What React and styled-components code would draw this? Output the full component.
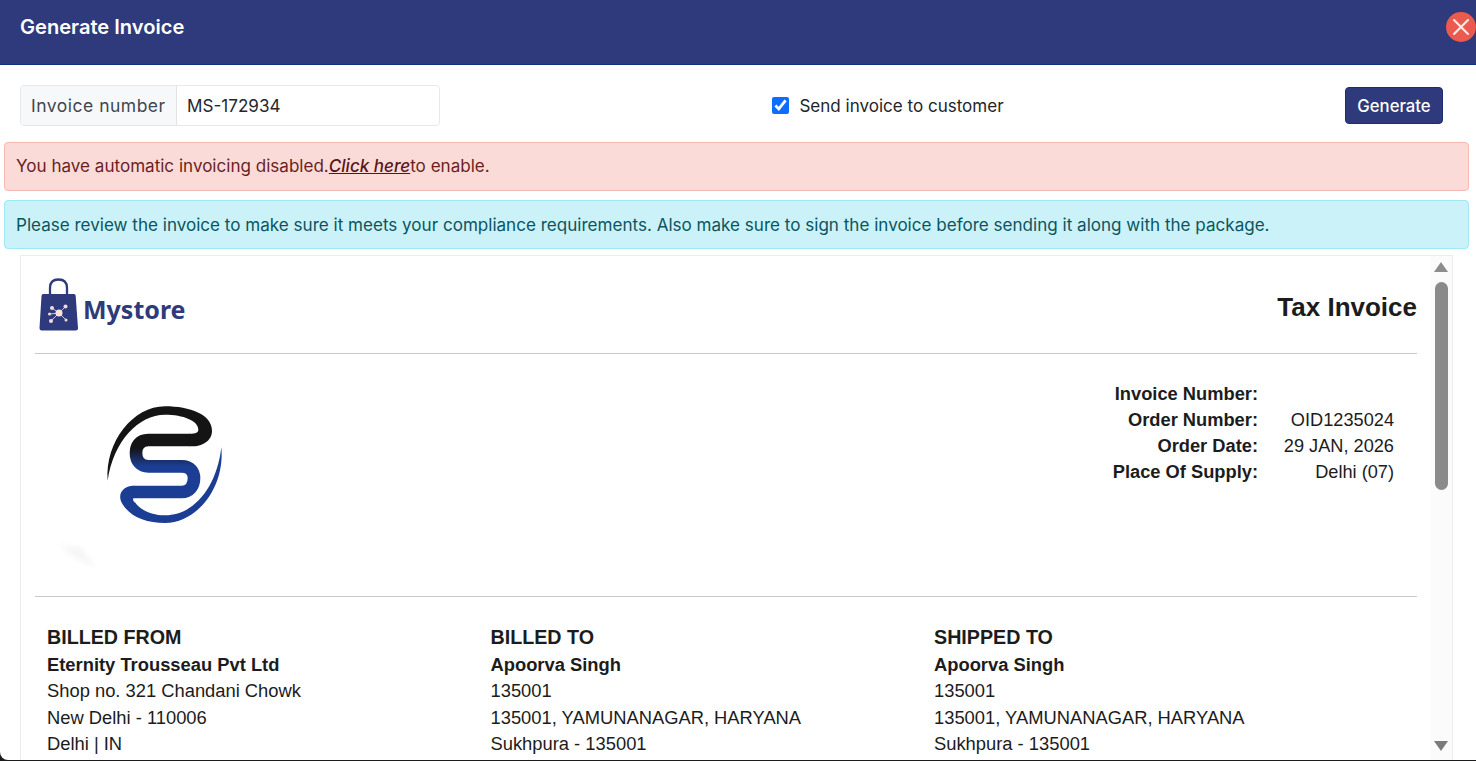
import React from 'react';
import styled, { createGlobalStyle } from 'styled-components';
import { X } from 'lucide-react';

const GlobalStyle = createGlobalStyle`
  html, body {
    margin: 0;
    height: 100%;
    background: #1c1c1c;
    overflow: hidden;
  }
  * {
    box-sizing: border-box;
  }
`;

const Modal = styled.div`
  position: relative;
  display: flex;
  flex-flow: column nowrap;
  width: 1476px;
  height: 760px;
  background: #fff;
  border-radius: 0 0 0 8px;
  overflow: hidden;
  font-family: Inter, 'Liberation Sans', sans-serif;
`;

const Header = styled.header`
  flex: 0 0 65px;
  padding: 14px 20px 0;
  background: #2e3a7b;
  border-bottom: 1px solid #12307f;
`;

const Title = styled.h2`
  margin: 0;
  font-size: 20.1px;
  line-height: 26px;
  font-weight: 600;
  color: #fff;
`;

const CloseButton = styled.button`
  position: absolute;
  top: 12px;
  left: 1446px;
  display: flex;
  align-items: center;
  justify-content: center;
  width: 30px;
  height: 30px;
  padding: 0;
  border: 0;
  border-radius: 50%;
  background: #ea5a4e;
  color: #fde9e6;
`;

const Toolbar = styled.div`
  flex: 0 0 77px;
  display: flex;
  align-items: center;
  justify-content: space-between;
  padding: 4px 33px 0 20px;
`;

const InputGroup = styled.div`
  display: flex;
  width: 420px;
  height: 41px;
  border: 1px solid #e6e8eb;
  border-radius: 4px;
  overflow: hidden;
`;

const InputLabel = styled.span`
  display: flex;
  align-items: center;
  padding: 0 10px;
  width: 156px;
  background: #f7f8fa;
  border-right: 1px solid #e2e4e8;
  color: #3f4650;
  font-size: 17.5px;
  letter-spacing: 0.5px;
  white-space: nowrap;
`;

const InputValue = styled.span`
  display: flex;
  align-items: center;
  padding: 0 10px;
  color: #23272e;
  font-size: 17.1px;
`;

const CheckLabel = styled.label`
  display: flex;
  align-items: center;
  gap: 10px;
  margin-left: -9px;
  font-size: 17.05px;
  color: #212529;
`;

const CheckBox = styled.input`
  width: 17px;
  height: 17px;
  margin: 0;
  accent-color: #0d6efd;
`;

const GenerateButton = styled.button`
  width: 98px;
  height: 37px;
  padding: 0;
  border: 1px solid #1f2c72;
  border-radius: 4px;
  background: #2e3a7b;
  color: #fff;
  font-family: inherit;
  font-size: 16.7px;
  font-weight: 500;
`;

const Alert = styled.div`
  flex: 0 0 49px;
  display: flex;
  align-items: center;
  width: 1465px;
  margin: 0 0 9px 4px;
  padding: 0 11px ${({ $danger }) => ($danger ? '2px' : '1px')};
  border: 1px solid ${({ $danger }) => ($danger ? '#f7b9b3' : '#a0e8f4')};
  border-radius: 4px;
  background: ${({ $danger }) => ($danger ? '#fadbd8' : '#caf2f8')};
  color: ${({ $danger }) => ($danger ? '#6a1f1f' : '#0a5560')};
  font-size: 17.07px;
  white-space: pre;
`;

const AlertLink = styled.a`
  font-style: italic;
  font-weight: 500;
  color: #58151c;
  text-decoration: underline;
`;

const Frame = styled.div`
  flex: 1;
  display: flex;
  min-height: 0;
  width: 1433px;
  margin: -3px 0 0 20px;
  border: 1px solid #ececec;
  border-bottom: 0;
  font-family: 'Liberation Sans', Arial, sans-serif;
  color: #1c1c1c;
`;

const InvoiceBody = styled.div`
  flex: 1;
  min-width: 0;
  padding: 0 13px 0 14px;
  overflow: hidden;
`;

const InvoiceTop = styled.div`
  display: flex;
  align-items: center;
  justify-content: space-between;
  height: 98px;
  border-bottom: 1px solid #c9c9c9;
`;

const Brand = styled.div`
  display: flex;
  align-items: flex-end;
  gap: 4px;
  margin-left: 4px;
`;

const BrandName = styled.span`
  margin-bottom: 6px;
  font-family: 'Noto Sans', sans-serif;
  font-size: 25px;
  line-height: 34px;
  font-weight: 700;
  color: #2e3a7b;
`;

const DocTitle = styled.h1`
  margin: 6px 0 0;
  font-size: 26px;
  font-weight: 700;
`;

const Details = styled.div`
  display: flex;
  justify-content: space-between;
  height: 243px;
  border-bottom: 1px solid #c9c9c9;
`;

const SellerLogo = styled.svg`
  display: block;
  margin: 49px 0 0 15px;
`;

const MetaTable = styled.dl`
  display: grid;
  grid-template-columns: auto 136px;
  grid-auto-rows: 26px;
  align-content: start;
  margin: 27px 23px 0 0;
  font-size: 18.2px;
  line-height: 26px;
`;

const MetaLabel = styled.dt`
  font-size: 18.3px;
  font-weight: 700;
  text-align: right;
`;

const MetaValue = styled.dd`
  margin: 0;
  text-align: right;
`;

const Parties = styled.div`
  display: grid;
  grid-template-columns: repeat(3, 443.5px);
  padding: 26px 0 0 12px;
`;

const Party = styled.div`
  font-size: 18.35px;
  line-height: 26.3px;
`;

const PartyHeading = styled.div`
  margin-bottom: 1px;
  font-size: 19.7px;
  line-height: 28px;
  font-weight: 700;
`;

const PartyName = styled.div`
  font-weight: 700;
`;

const Scrollbar = styled.div`
  flex: 0 0 22px;
  display: flex;
  flex-flow: column nowrap;
  align-items: center;
  padding: 6px 0 9px;
  background: #fbfbfb;
`;

const ScrollArrow = styled.div`
  width: 0;
  height: 0;
  margin-top: ${({ $down }) => ($down ? 'auto' : '0')};
  border-left: 7px solid transparent;
  border-right: 7px solid transparent;
  border-top: ${({ $down }) => ($down ? '10px solid #7b7b7b' : '0')};
  border-bottom: ${({ $down }) => ($down ? '0' : '10px solid #8c8c8c')};
`;

const ScrollThumb = styled.div`
  width: 13px;
  height: 208px;
  margin-top: 10px;
  border-radius: 7px;
  background: #8a8a8a;
`;

const metaRows = [
  ['Invoice Number:', ''],
  ['Order Number:', 'OID1235024'],
  ['Order Date:', '29 JAN, 2026'],
  ['Place Of Supply:', 'Delhi (07)'],
];

const parties = [
  {
    heading: 'BILLED FROM',
    name: 'Eternity Trousseau Pvt Ltd',
    lines: ['Shop no. 321 Chandani Chowk', 'New Delhi - 110006', 'Delhi | IN'],
  },
  {
    heading: 'BILLED TO',
    name: 'Apoorva Singh',
    lines: ['135001', '135001, YAMUNANAGAR, HARYANA', 'Sukhpura - 135001'],
  },
  {
    heading: 'SHIPPED TO',
    name: 'Apoorva Singh',
    lines: ['135001', '135001, YAMUNANAGAR, HARYANA', 'Sukhpura - 135001'],
  },
];

const BagIcon = () => (
  <svg width="40" height="54" viewBox="0 0 40 54">
    <path d="M11 18 V10 C11 4 14 1.5 19.5 1.5 C25 1.5 28 4 28 10 V18" fill="none" stroke="#2e3a7b" strokeWidth="2.3" />
    <path d="M4 16 H35 Q36.5 16 36.7 18 L39 50 Q39 52.5 36.5 52.5 H3 Q0.5 52.5 0.5 50 L2.5 18 Q2.7 16 4 16 Z" fill="#2e3a7b" />
    <path d="M20 35 L26 29 M20 35 L13 30 M20 35 L11 36 M20 35 L12 43 M20 35 L27 42" stroke="#c9c6dc" strokeWidth="1" />
    <circle cx="20" cy="35" r="3.5" fill="#fbe3dc" />
    <circle cx="26.5" cy="28.5" r="2" fill="#f3dcd8" />
    <circle cx="13" cy="30" r="2" fill="#f3dcd8" />
    <circle cx="10.5" cy="36" r="1.5" fill="#f3dcd8" />
    <circle cx="12" cy="43" r="2" fill="#f3dcd8" />
    <circle cx="27" cy="42" r="1.5" fill="#f3dcd8" />
  </svg>
);

const SLogo = () => (
  <SellerLogo width="177" height="173" viewBox="0 55 531 519">
    <defs>
      <linearGradient id="sGrad" gradientUnits="userSpaceOnUse" x1="0" y1="190" x2="0" y2="245">
        <stop offset="0" stopColor="#141414" />
        <stop offset="1" stopColor="#1b3d94" />
      </linearGradient>
      <filter id="ghostBlur">
        <feGaussianBlur stdDeviation="8" />
      </filter>
    </defs>
    <path
      d="M173 288 C165 170 250 65 345 65 C420 65 486 90 486 138 C486 170 455 185 425 185 L418 185 L418 147 C438 147 445 143 445 135 C445 108 400 90 345 90 C265 90 190 170 173 288 Z"
      fill="#141414"
    />
    <path
      d="M420 166 L295 166 C268 166 258 185 258 205 C258 230 272 245 295 245 L395 245 C422 245 432 262 432 280 C432 305 418 322 395 322 L248 322"
      fill="none"
      stroke="url(#sGrad)"
      strokeWidth="38"
    />
    <path
      d="M514 188 C525 310 440 415 345 415 C285 415 235 395 213 350 C203 322 225 303 250 303 L250 341 C248 345 250 350 256 354 C275 380 310 392 345 392 C430 392 500 310 514 188 Z"
      fill="#1b3d94"
    />
    <path d="M25 480 L95 490 L135 548 L75 520 Z" fill="#f6f6f6" filter="url(#ghostBlur)" />
  </SellerLogo>
);

const App = () => (
  <>
    <GlobalStyle />
    <Modal>
      <Header>
        <Title>Generate Invoice</Title>
      </Header>
      <CloseButton aria-label="Close">
        <X size={28} strokeWidth={1.8} />
      </CloseButton>
      <Toolbar>
        <InputGroup>
          <InputLabel>Invoice number</InputLabel>
          <InputValue>MS-172934</InputValue>
        </InputGroup>
        <CheckLabel>
          <CheckBox type="checkbox" defaultChecked />
          Send invoice to customer
        </CheckLabel>
        <GenerateButton>Generate</GenerateButton>
      </Toolbar>
      <Alert $danger>
        You have automatic invoicing disabled.<AlertLink>Click here</AlertLink>to enable.
      </Alert>
      <Alert>
        Please review the invoice to make sure it meets your compliance requirements. Also make sure to sign the invoice
        before sending it along with the package.
      </Alert>
      <Frame>
        <InvoiceBody>
          <InvoiceTop>
            <Brand>
              <BagIcon />
              <BrandName>Mystore</BrandName>
            </Brand>
            <DocTitle>Tax Invoice</DocTitle>
          </InvoiceTop>
          <Details>
            <SLogo />
            <MetaTable>
              {metaRows.map(([label, value]) => (
                <React.Fragment key={label}>
                  <MetaLabel>{label}</MetaLabel>
                  <MetaValue>{value}</MetaValue>
                </React.Fragment>
              ))}
            </MetaTable>
          </Details>
          <Parties>
            {parties.map(party => (
              <Party key={party.heading}>
                <PartyHeading>{party.heading}</PartyHeading>
                <PartyName>{party.name}</PartyName>
                {party.lines.map(line => (
                  <div key={line}>{line}</div>
                ))}
              </Party>
            ))}
          </Parties>
        </InvoiceBody>
        <Scrollbar>
          <ScrollArrow />
          <ScrollThumb />
          <ScrollArrow $down />
        </Scrollbar>
      </Frame>
    </Modal>
  </>
);

export default App;
